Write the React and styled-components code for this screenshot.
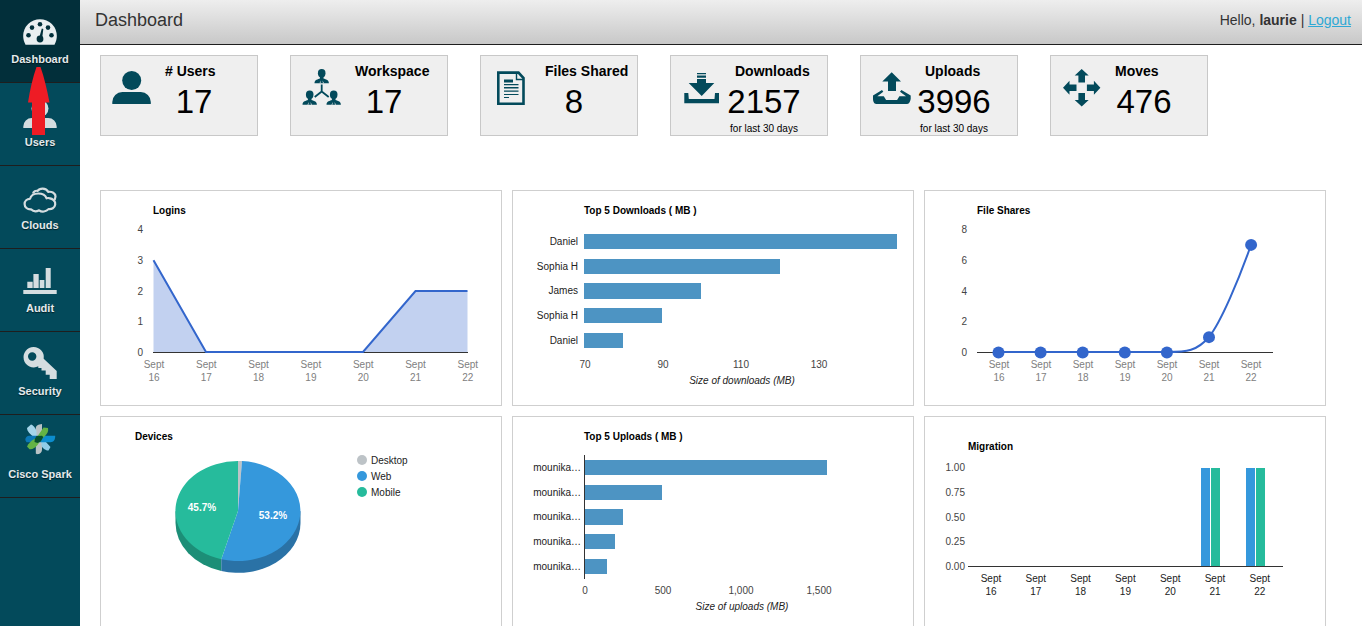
import React from "react";
import styled, { createGlobalStyle } from "styled-components";

const teal = "#034a5b";
const sans = '"Liberation Sans", Arial, Helvetica, sans-serif';

const GlobalStyle = createGlobalStyle`
  * { box-sizing: border-box; }
  body { margin: 0; background: #fff; font-family: ${sans}; color: #000; }
`;

const Shell = styled.div`
  display: flex;
  height: 100vh;
  overflow: hidden;
`;

const Sidebar = styled.nav`
  position: relative;
  flex: 0 0 80px;
  background: ${teal};
`;

const NavItem = styled.a`
  display: flex;
  flex-direction: column;
  align-items: center;
  height: 83px;
  padding-top: 8px;
  border-bottom: 1px solid #1e1e1e;
  background: ${(p) => (p.$active ? "#022f3a" : "transparent")};
  color: #e4eaec;
  font-size: 11px;
  font-weight: bold;
  line-height: 14px;
  white-space: nowrap;
  text-decoration: none;
  text-shadow: 0 1px 1px rgba(0, 0, 0, 0.6);
`;

const NavIcon = styled.svg`
  display: block;
  width: 40px;
  height: 44px;
  fill: #d5dde0;
`;

const Pointer = styled.svg`
  position: absolute;
  top: 67px;
  left: 28px;
  width: 22px;
  height: 68px;
  fill: #ee1c25;
  pointer-events: none;
`;

const Page = styled.div`
  flex: 1;
  min-width: 0;
  display: flex;
  flex-direction: column;
`;

const Header = styled.header`
  flex: none;
  display: flex;
  justify-content: space-between;
  height: 45px;
  padding: 0 11px 5px 15px;
  align-items: center;
  border-bottom: 1px solid #1e1e1e;
  background: linear-gradient(#eeeeee, #c8c8c8);
  color: #333;
`;

const Title = styled.h1`
  margin: 0;
  font-size: 18px;
  font-weight: normal;
  line-height: 20px;
`;

const Greeting = styled.div`
  font-size: 14px;
  line-height: 20px;
`;

const Logout = styled.a`
  color: #2ea8d5;
  text-decoration: underline;
`;

const Content = styled.main`
  flex: 1;
  min-height: 0;
  overflow-y: auto;
  scrollbar-width: none;
  padding: 10px 36px 10px 20px;
`;

const Stats = styled.div`
  display: flex;
  flex-wrap: wrap;
  gap: 32px;
  margin-bottom: 54px;
`;

const StatCard = styled.section`
  display: flex;
  width: 158px;
  min-height: 81px;
  padding-left: 10px;
  background: #efefef;
  border: 1px solid #c8c8c8;
`;

const StatIcon = styled.svg`
  flex: none;
  width: 40px;
  height: 40px;
  margin-top: 12px;
  fill: ${teal};
`;

const StatBody = styled.div`
  width: 86px;
  padding-top: 5px;
  text-align: center;
`;

const StatLabel = styled.h2`
  margin: 0;
  padding-left: 14px;
  font-size: 14px;
  line-height: 20px;
  text-align: left;
  white-space: nowrap;
`;

const StatValue = styled.div`
  font-size: 33px;
  line-height: 42px;
`;

const StatNote = styled.div`
  font-size: 10px;
  line-height: 12px;
  white-space: nowrap;
`;

const Charts = styled.div`
  display: grid;
  grid-template-columns: repeat(3, 1fr);
  gap: 10px;
`;

const Panel = styled.section`
  border: 1px solid #cfcfcf;
  background: #fff;
`;

const Chart = styled.svg`
  display: block;
  width: 100%;
  height: auto;
  font-family: ${sans};
  font-size: 10px;
`;

const ChartTitle = styled.text`
  font-weight: bold;
  fill: #000;
`;

const Tick = styled.text`
  fill: ${(p) => (p.$tone === "light" ? "#808080" : p.$tone === "dark" ? "#222" : "#444")};
  text-anchor: ${(p) => p.$anchor || "middle"};
`;

const AxisTitle = styled.text`
  font-style: italic;
  fill: #222;
  text-anchor: middle;
`;

const SliceLabel = styled.text`
  font-weight: bold;
  fill: #fff;
  text-anchor: middle;
`;

const Axis = styled.path`
  stroke: #333;
  fill: none;
`;

const Series = styled.path`
  stroke: #3366cc;
  stroke-width: 2;
  fill: none;
`;

const days = [16, 17, 18, 19, 20, 21, 22];

/* Navigation */

const navItems = [
  {
    name: "Dashboard",
    icon: (
      <>
        <path d="M25.5 44.7C24 42 23.2 39 23.2 36a16.8 16.8 0 0 1 33.6 0c0 3-.8 6-2.3 8.7Z" fill="#e9eef0" />
        <g fill="#022f3a">
          <circle cx="28.5" cy="35.3" r="2.3" />
          <circle cx="32" cy="27.6" r="2.3" />
          <circle cx="40" cy="24.2" r="2.3" />
          <circle cx="48" cy="27.6" r="2.3" />
          <circle cx="51.5" cy="35.3" r="2.3" />
          <circle cx="40" cy="39" r="3.4" />
          <path d="M41.8 28.5 43.3 29 42 39.2 39 38.6Z" />
        </g>
      </>
    ),
  },
  {
    name: "Users",
    icon: (
      <>
        <circle cx="40" cy="25.5" r="8.5" />
        <path d="M23.3 45v-1.5a8.5 8.5 0 0 1 8.5-8.5h16.4a8.5 8.5 0 0 1 8.5 8.5V45Z" />
      </>
    ),
  },
  {
    name: "Clouds",
    icon: (
      <g fill="none" stroke="#d5dde0" strokeWidth="2.2" strokeLinejoin="round">
        <path d="M33 27.500c.6-2.200 2.600-3.200 4.600-2.500 2-3 8.200-3.600 10.700.9 3.600-.6 7.200 1.200 7.200 4.600 0 1.900-.8 3.300-2.300 4.200" />
        <path d="M31 43.300c-3.600.3-6.400-2-6.400-5.300 0-3.200 2.500-5.200 5.400-5.200 1-3.600 4.700-5.300 8.300-5.300s7 1.500 8.300 4.800c.8-.3 1.600-.4 2.500-.2 3.800.5 6.600 3.200 6.100 6.500-.5 3.200-3.600 5-6.700 4.500-2.300 2.700-6.700 3.300-9.400 1.200-2.800 1.600-6.100 1.100-8.100-1Z" />
      </g>
    ),
  },
  {
    name: "Audit",
    icon: (
      <path d="M23.300 41h33.400v4H23.300ZM27.300 32.700h5.400V39h-5.400ZM33.400 25h5.300v14h-5.300ZM39.700 31h4.700v8h-4.700ZM45.700 19h5v20h-5Z" />
    ),
  },
  {
    name: "Security",
    icon: (
      <path
        fillRule="evenodd"
        d="M33.500 15a10.200 10.200 0 0 1 10.200 11.800L56.700 39v8h-7v-4.300h-4V38.500h-4.200V36h-3.200V34.300A10.200 10.200 0 1 1 33.500 15ZM32.200 20.300a4.200 4.200 0 1 0 0 8.400a4.200 4.200 0 0 0 0-8.400Z"
      />
    ),
  },
  {
    name: "Cisco Spark",
    icon: (
      <>
        <path d="M35.800 24V13c0-2.200 2.600-3.700 6.200-4V24Z" fill="#b9c2c5" />
        <path d="M35.800 24H42v10.500c0 3-2.200 4.700-5 4.700l-1.200-.8Z" fill="#b9c2c5" />
        <path d="M27 13 31 9.500C33 9.800 35.500 13 36.500 16V23L33 21.500C30 19 27 16 27 13Z" fill="#a5d5ea" />
        <path d="M41.500 25 45.500 26.500 50.500 32 48.500 35.500C45.500 35.800 42.500 33 41.500 31Z" fill="#8fcce8" />
        <path d="M25.300 25c0-2.500 1.600-4.200 4-4.200H39v6.500H26.500Z" fill="#0c78b6" />
        <path d="M39 20.800h16.200c.2 3.700-1.600 6.500-4.700 6.500H39Z" fill="#0c8dce" />
        <path d="M38 20.500 43.500 12.500 48 13C48.700 16 47.500 18.500 45 21L40 25.500 37 24.500Z" fill="#64b345" />
        <path d="M36.500 23 41 25 37.500 30C35 32.800 32.500 34.800 29.500 34.200L27 31.500C28.500 28.500 31 26 33.500 24.500Z" fill="#64b345" />
        <path d="M36.500 21 42 20.800 43.300 22 40.800 26.500 37.500 28 34.500 27 34.800 24Z" fill="#06502f" />
      </>
    ),
  },
];

/* Stat tiles */

const Person = ({ x, y }) => (
  <g transform={`translate(${x} ${y})`}>
    <ellipse cx="0" cy="4.2" rx="3.8" ry="4.2" />
    <path d="M-1.800 6.500h3.600v3C3.500 10.300 7.200 10.600 7.200 14.200H-7.200C-7.200 10.600-3.500 10.300-1.800 9.500Z" />
    <path d="M-.8 11.500-1.300 14.200H-2.300ZM.8 11.500 1.300 14.200H2.300Z" fill="#efefef" />
  </g>
);

const Arrow = ({ turn }) => (
  <path d="M20.700 1 27.700 7.500H24V14.500H17.400V7.500H13.700Z" transform={`rotate(${turn} 20.700 19.700)`} />
);

const stats = [
  {
    label: "# Users",
    value: "17",
    icon: (
      <>
        <circle cx="20.7" cy="12.5" r="9.5" />
        <path d="M1.300 36v-2a10 10 0 0 1 10-10h18.500a10 10 0 0 1 10 10v2Z" />
      </>
    ),
  },
  {
    label: "Workspace",
    value: "17",
    icon: (
      <>
        <Person x={20.7} y={1} />
        <Person x={8.7} y={22.6} />
        <Person x={32.7} y={22.6} />
        <path d="M20.700 16.500V23.500L13.700 29M20.700 23.500 27.700 29" fill="none" stroke={teal} strokeWidth="1.8" />
      </>
    ),
  },
  {
    label: "Files Shared",
    value: "8",
    icon: (
      <>
        <path d="M7.300 4.600H27.500L32.500 10V35.800H7.300Z" fill="none" stroke={teal} strokeWidth="2.6" />
        <path d="M25.500 5v6.500H32" fill="none" stroke={teal} strokeWidth="1.4" />
        <path d="M13 11.500h9v3h-9ZM13 16h14.500v1.200H13ZM13 19h14.500v1.400H13ZM13 22.600h14.500v1.200H13ZM13 26h14.500v1H13ZM13 29h5v1h-5Z" />
      </>
    ),
  },
  {
    label: "Downloads",
    value: "2157",
    note: "for last 30 days",
    icon: (
      <>
        <path d="M16 5h9v1.300h-9ZM16 7.500h9v2.300h-9ZM16 11h9v4h8.300L20.700 28 7.700 15H16Z" />
        <path d="M3.300 25h4l.5 6h25.700l.5-6h4v10.200H3.300Z" />
      </>
    ),
  },
  {
    label: "Uploads",
    value: "3996",
    note: "for last 30 days",
    icon: (
      <>
        <path d="M20.700 4.300 30 13.500H25V23H17V13.500H11.300Z" />
        <path d="M2 27.500 11 22l1.300 1.700-6 4.600h6.500l2.300 3.700h11l2.300-3.700H35l-6-4.600L30.400 22l9.300 5.500V31c-.5 2-1.300 5-3.500 5H5.200c-2.200 0-3.200-3-3.200-5Z" />
      </>
    ),
  },
  {
    label: "Moves",
    value: "476",
    icon: [0, 90, 180, 270].map((turn) => <Arrow key={turn} turn={turn} />),
  },
];

/* Charts */

function DayLabels({ start, step, y, tone }) {
  return days.map((day, i) => (
    <Tick key={day} $tone={tone}>
      <tspan x={start + step * i} y={y}>Sept</tspan>
      <tspan x={start + step * i} y={y + 13}>{day}</tspan>
    </Tick>
  ));
}

function ValueLabels({ values, x, bottom, step }) {
  return values.map((value, i) => (
    <Tick key={value} x={x} y={bottom - step * i} $anchor="end">{value}</Tick>
  ));
}

function LoginsChart() {
  return (
    <Chart viewBox="0 0 400 214" role="img" aria-label="Logins">
      <ChartTitle x="52" y="23">Logins</ChartTitle>
      <ValueLabels values={[0, 1, 2, 3, 4]} x={42} bottom={165} step={30.75} />
      <path d="M52.500 69.250 105 161.500H262L314.500 100H366.500V161.500H52.500Z" fill="#c2d1f0" />
      <Axis d="M52 161.500H367" />
      <Series d="M52.500 69.250 105 161H262L314.500 100H366.500" />
      <DayLabels start={53} step={52.3} y={177} tone="light" />
    </Chart>
  );
}

function BarRanking({ title, axisTitle, rows, ticks, labelX, axis }) {
  const tops = [43, 68, 92, 117, 142];
  return (
    <Chart viewBox="0 0 400 214" role="img" aria-label={title}>
      <ChartTitle x="71" y="23">{title}</ChartTitle>
      {rows.map(([name, width], i) => (
        <g key={i}>
          <Tick x={labelX} y={tops[i] + 11} $anchor="end" $tone="dark">{name}</Tick>
          <rect x="71" y={tops[i]} width={width} height={i === 2 ? 16 : 15} fill="#4d94c3" />
        </g>
      ))}
      {axis && <Axis d="M71.500 38V162" />}
      {ticks.map((tick, i) => (
        <Tick key={tick} x={72 + 78 * i} y="177">{tick}</Tick>
      ))}
      <AxisTitle x="229" y="193">{axisTitle}</AxisTitle>
    </Chart>
  );
}

function FileSharesChart() {
  const start = 73.5;
  const step = 42.1;
  const shares = [0, 0, 0, 0, 0, 1, 7];
  return (
    <Chart viewBox="0 0 400 214" role="img" aria-label="File Shares">
      <ChartTitle x="52" y="23">File Shares</ChartTitle>
      <ValueLabels values={[0, 2, 4, 6, 8]} x={42} bottom={165} step={30.75} />
      <Axis d="M52 161.500H348" />
      <Series d="M73.500 161H242C262 161 272 160 284 146C296 131 314 88 326 54" />
      {shares.map((value, i) => (
        <circle key={i} cx={start + step * i} cy={161.5 - 15.375 * value} r="6" fill="#3366cc" />
      ))}
      <DayLabels start={74} step={42} y={177} tone="light" />
    </Chart>
  );
}

function DevicesChart() {
  const legend = [["Desktop", "#bdc3c7"], ["Web", "#3598dc"], ["Mobile", "#26bb9c"]];
  return (
    <Chart viewBox="0 0 400 214" role="img" aria-label="Devices">
      <ChartTitle x="34" y="23">Devices</ChartTitle>
      <path d="M74.500 94V106A62.500 50 0 0 0 120.300 154V142Z" fill="#1c8e77" />
      <path d="M199.500 94V106A62.500 50 0 0 1 120.300 154V142Z" fill="#2a72a6" />
      <path d="M137 94V44A62.500 50 0 0 1 141 44.100Z" fill="#bdc3c7" />
      <path d="M137 94 141 44.100A62.500 50 0 1 1 120.300 142.200Z" fill="#3598dc" />
      <path d="M137 94 120.300 142.200A62.500 50 0 0 1 137 44Z" fill="#26bb9c" />
      <SliceLabel x="101" y="94">45.7%</SliceLabel>
      <SliceLabel x="172" y="102">53.2%</SliceLabel>
      {legend.map(([name, color], i) => (
        <g key={name}>
          <circle cx="261" cy={43 + 16 * i} r="5" fill={color} />
          <Tick x="270" y={47 + 16 * i} $anchor="start" $tone="dark">{name}</Tick>
        </g>
      ))}
    </Chart>
  );
}

function MigrationChart() {
  return (
    <Chart viewBox="0 0 400 214" role="img" aria-label="Migration">
      <ChartTitle x="43" y="33">Migration</ChartTitle>
      <ValueLabels values={["0.00", "0.25", "0.50", "0.75", "1.00"]} x={40} bottom={153} step={24.75} />
      {[276, 321].map((x) => (
        <g key={x}>
          <rect x={x} y="51" width="9" height="98" fill="#3598dc" />
          <rect x={x + 10} y="51" width="9" height="98" fill="#26bb9c" />
        </g>
      ))}
      <Axis d="M43 149.500H358" />
      <DayLabels start={66} step={44.8} y={165} tone="dark" />
    </Chart>
  );
}

export default function App() {
  return (
    <Shell>
      <GlobalStyle />
      <Sidebar>
        {navItems.map((item, i) => (
          <NavItem key={item.name} href="#" $active={i === 0}>
            <NavIcon viewBox="20 8 40 44" aria-hidden="true">{item.icon}</NavIcon>
            {item.name}
          </NavItem>
        ))}
        <Pointer viewBox="0 0 22 68" aria-hidden="true">
          <path d="M8.500 0H12.500C16 10 19 22 21.500 35.500H17V68H4V35.500H0C2 22 5 10 8.500 0Z" />
        </Pointer>
      </Sidebar>
      <Page>
        <Header>
          <Title>Dashboard</Title>
          <Greeting>
            Hello, <b>laurie</b> | <Logout href="#">Logout</Logout>
          </Greeting>
        </Header>
        <Content>
          <Stats>
            {stats.map((stat) => (
              <StatCard key={stat.label}>
                <StatIcon viewBox="0 0 40 40" aria-hidden="true">{stat.icon}</StatIcon>
                <StatBody>
                  <StatLabel>{stat.label}</StatLabel>
                  <StatValue>{stat.value}</StatValue>
                  {stat.note && <StatNote>{stat.note}</StatNote>}
                </StatBody>
              </StatCard>
            ))}
          </Stats>
          <Charts>
            <Panel><LoginsChart /></Panel>
            <Panel>
              <BarRanking
                title="Top 5 Downloads ( MB )"
                axisTitle="Size of downloads (MB)"
                rows={[["Daniel", 313], ["Sophia H", 196], ["James", 117], ["Sophia H", 78], ["Daniel", 39]]}
                ticks={["70", "90", "110", "130"]}
                labelX={65}
              />
            </Panel>
            <Panel><FileSharesChart /></Panel>
            <Panel><DevicesChart /></Panel>
            <Panel>
              <BarRanking
                title="Top 5 Uploads ( MB )"
                axisTitle="Size of uploads (MB)"
                rows={[["mounika…", 243], ["mounika…", 78], ["mounika…", 39], ["mounika…", 31], ["mounika…", 23]]}
                ticks={["0", "500", "1,000", "1,500"]}
                labelX={68}
                axis
              />
            </Panel>
            <Panel><MigrationChart /></Panel>
          </Charts>
        </Content>
      </Page>
    </Shell>
  );
}
